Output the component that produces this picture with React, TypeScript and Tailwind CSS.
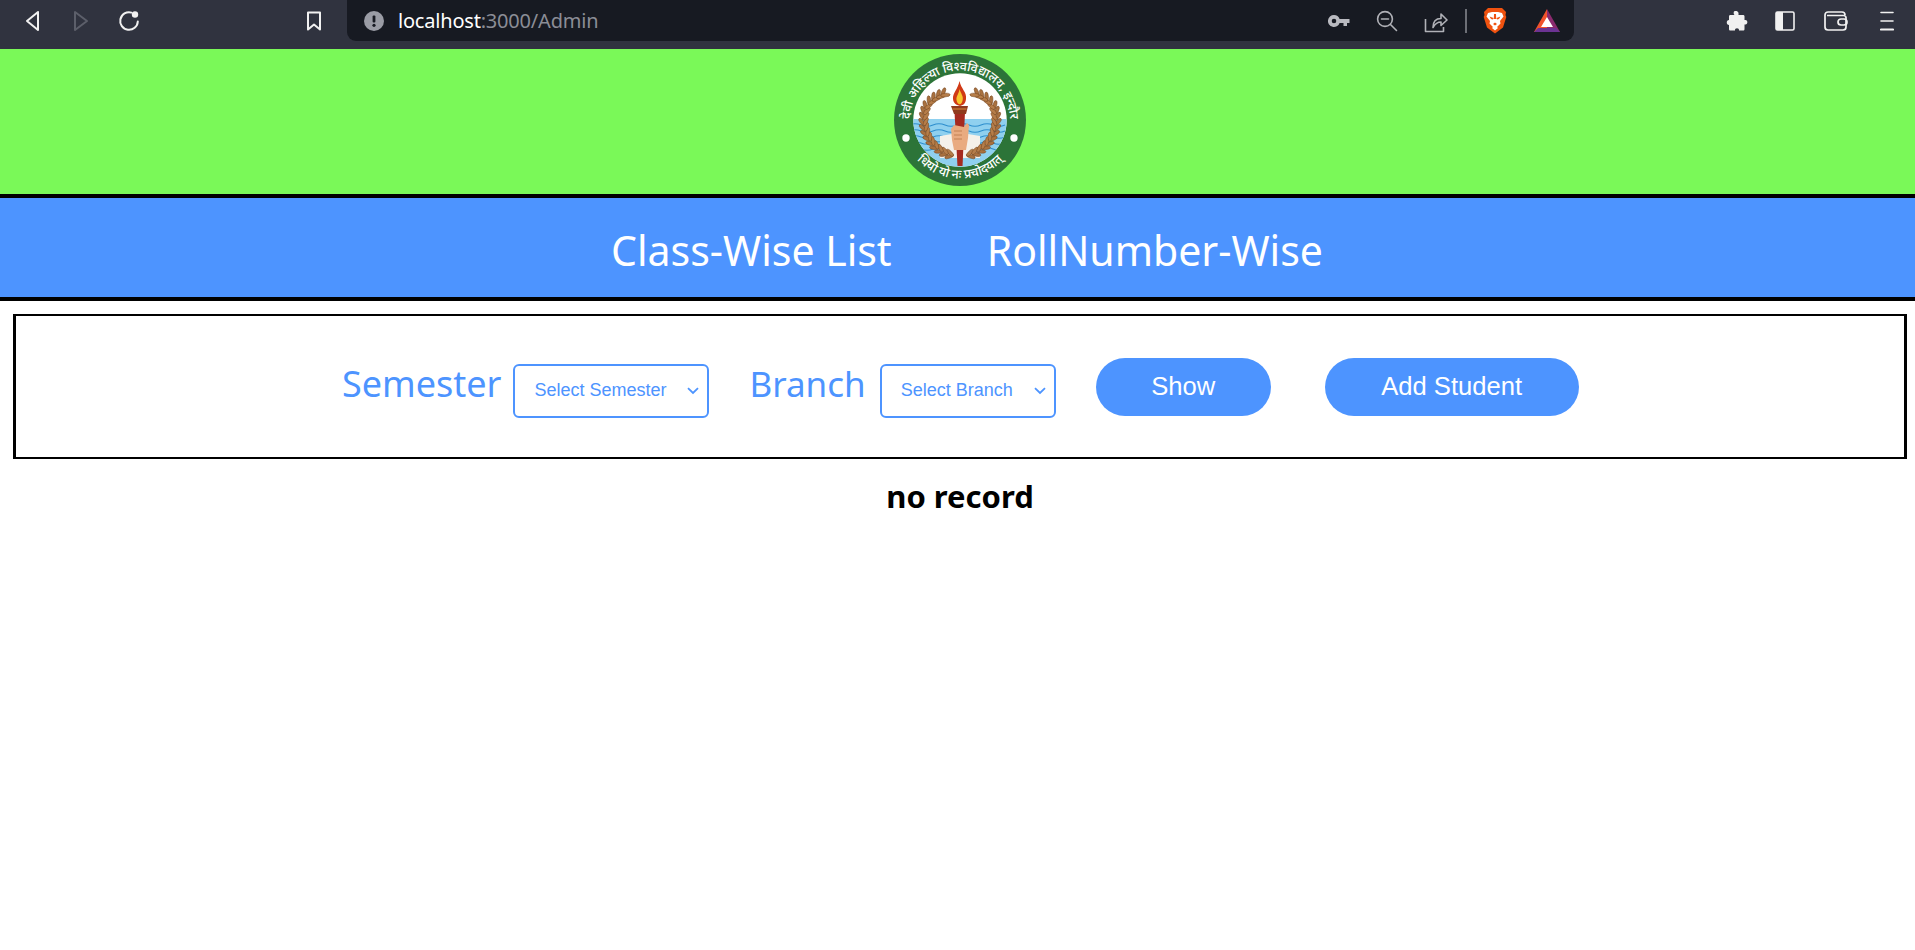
import React from "react";

const Chrome = () => (
  <div className="flex h-[49px] items-start bg-[#30333f] font-['Noto_Sans',sans-serif]">
    <div className="flex h-[41px] w-[347px] shrink-0 items-center pl-[23px]">
      <svg width="20" height="24" viewBox="0 0 20 24" fill="none" stroke="#f1f1f1" strokeWidth="2" strokeLinejoin="round">
        <path d="M15 3 L15 21 L4 12 Z" />
      </svg>
      <svg className="ml-[28px]" width="20" height="24" viewBox="0 0 20 24" fill="none" stroke="#5c5f6a" strokeWidth="2" strokeLinejoin="round">
        <path d="M4 3 L4 21 L16 12 Z" />
      </svg>
      <svg className="ml-[27px]" width="22" height="24" viewBox="0 0 22 24" fill="none" stroke="#f1f1f1" strokeWidth="2" strokeLinecap="round">
        <path d="M13.5 3.6 A8.8 8.8 0 1 0 19.8 12.5" />
        <circle cx="17" cy="5.5" r="3.2" fill="#f1f1f1" stroke="none" />
      </svg>
      <svg className="ml-[165px]" width="18" height="24" viewBox="0 0 18 24" fill="none" stroke="#f1f1f1" strokeWidth="2" strokeLinejoin="round">
        <path d="M3 3.5 H15 V20.5 L9 15.5 L3 20.5 Z" />
      </svg>
    </div>
    <div className="flex h-[41px] w-[1227px] shrink-0 items-center rounded-b-[9px] bg-[#171a22] pl-[17px]">
      <svg width="20" height="20" viewBox="0 0 20 20">
        <circle cx="10" cy="10" r="10" fill="#9a9ca5" />
        <rect x="8.6" y="4.5" width="2.8" height="7" rx="1" fill="#171a22" />
        <circle cx="10" cy="14.3" r="1.6" fill="#171a22" />
      </svg>
      <div className="ml-[14px] text-[20px] leading-none tracking-[-0.2px] text-white">
        localhost<span className="text-[#8b8d96]">:3000/Admin</span>
      </div>
      <div className="ml-auto flex items-center pr-[13px]">
        <svg width="22" height="14" viewBox="0 0 22 14" fill="#b9bac0">
          <path fillRule="evenodd" d="M6 1 A6 6 0 0 1 11.6 5 H21.5 V9 H19 V12 H15.5 V9 H11.6 A6 6 0 1 1 6 1 Z M6 4.7 A2.3 2.3 0 1 0 6 9.3 A2.3 2.3 0 0 0 6 4.7 Z" />
        </svg>
        <svg className="ml-[26px]" width="22" height="22" viewBox="0 0 22 22" fill="none" stroke="#b0b1b7" strokeWidth="1.6" strokeLinecap="round">
          <circle cx="9" cy="9" r="7.4" />
          <path d="M5.5 9 H12.5 M14.5 14.5 L20.5 20.5" />
        </svg>
        <svg className="ml-[26px]" width="24" height="24" viewBox="0 0 24 24" fill="none" stroke="#b0b1b7" strokeWidth="1.6" strokeLinejoin="round">
          <path d="M1.5 10 V22.5 H19.5 V18" />
          <path d="M9 18.5 C9 12.5 12 9.5 17 9.5 V5 L23 11 L17 16.5 V13 C13.5 13 11 15 9 18.5 Z" />
        </svg>
        <div className="ml-[17px] h-[24px] w-[2px] bg-[#6d6f76]" />
        <svg className="ml-[16px]" width="24" height="27" viewBox="0 0 24 27">
          <path d="M5 1 H19 L23 5 L22.5 8 L23.3 10 L20 20.5 L12 26.5 L4 20.5 L0.7 10 L1.5 8 L1 5 Z" fill="#f0520f" />
          <path d="M5 6 L9 5 H15 L19 6 L20.5 9.5 L17 14 L17.5 16.5 L14 20 L15 21 L12 23.5 L9 21 L10 20 L6.5 16.5 L7 14 L3.5 9.5 Z" fill="#ffffff" />
          <path d="M6.5 9.5 L10.5 11 L10 12.6 L8 12 Z M17.5 9.5 L13.5 11 L14 12.6 L16 12 Z M11 7 H13 L13.2 12 H10.8 Z M10 17 L12 15.5 L14 17 L12 18.5 Z" fill="#f0520f" />
        </svg>
        <svg className="ml-[26px]" width="28" height="25" viewBox="0 0 28 25">
          <path d="M14 1 L27 24 H14 Z" fill="#8a2a6e" />
          <path d="M14 1 L1 24 H14 Z" fill="#f0522c" />
          <path d="M14 9 L20 19 H8 Z" fill="#ffffff" />
          <path d="M1 24 L5 20 H23 L27 24 Z" fill="#6b3393" />
        </svg>
      </div>
    </div>
    <div className="flex h-[41px] flex-1 items-center pl-[152px]">
      <svg width="22" height="22" viewBox="0 0 22 22" fill="#f1f1f1">
        <path d="M8 1.5 C9.5 0.5 12 1 12.5 3 L12.5 5 H17 C18 5 18.5 5.5 18.5 6.5 V10 H19.5 C22 10 22 14.5 19.5 14.5 H18.5 V19 C18.5 20 18 20.5 17 20.5 H13 C13.5 17.5 8.5 17.5 9 20.5 H4.5 C3.5 20.5 3 20 3 19 V15 C0 15 0 10 3 10 V6.5 C3 5.5 3.5 5 4.5 5 H8.5 C7.5 4 7.5 2.5 8 1.5 Z" />
      </svg>
      <svg className="ml-[27px]" width="20" height="20" viewBox="0 0 20 20" fill="none">
        <path d="M2 1 H8 V19 H2 A1 1 0 0 1 1 18 V2 A1 1 0 0 1 2 1 Z" fill="#f1f1f1" />
        <rect x="1" y="1" width="18" height="18" rx="1.5" stroke="#f1f1f1" strokeWidth="1.6" />
      </svg>
      <svg className="ml-[29px]" width="24" height="20" viewBox="0 0 24 20" fill="none" stroke="#f1f1f1" strokeWidth="1.7">
        <path d="M1 4 A3 3 0 0 1 4 1 H18 A3 3 0 0 1 21 4 M1 4 V16 A3 3 0 0 0 4 19 H19 A3 3 0 0 0 22 16 V6.5 A2.5 2.5 0 0 0 19.5 4.5 H3" />
        <rect x="14" y="8" width="9" height="6" rx="3" />
      </svg>
      <svg className="ml-[32px]" width="14" height="20" viewBox="0 0 14 20" fill="none" stroke="#f1f1f1" strokeLinecap="round">
        <path d="M1 1.5 H13 M1 10 H13" strokeWidth="1.6" />
        <path d="M1 18.5 H13" strokeWidth="2.2" />
      </svg>
    </div>
  </div>
);

const leafSpots = Array.from({ length: 16 }, (_, i) => {
  const deg = 102 + i * 8.8;
  const rad = (deg * Math.PI) / 180;
  const r = deg > 200 ? 36 - (deg - 200) * 0.16 : 36;
  return {
    x: (66 + r * Math.cos(rad)).toFixed(1),
    y: (66 + r * Math.sin(rad)).toFixed(1),
    rot: (deg + 90).toFixed(1),
  };
});

const Wreath = ({ flip }: { flip?: boolean }) => (
  <g transform={flip ? "matrix(-1 0 0 1 132 0)" : undefined}>
    {leafSpots.map((p, i) => (
      <g key={i} transform={`translate(${p.x} ${p.y}) rotate(${p.rot})`}>
        <ellipse cx="3.5" cy="0" rx="4.6" ry="1.8" transform="rotate(-32)" fill="#a9713f" stroke="#73451f" strokeWidth="0.5" />
        <ellipse cx="3.5" cy="0" rx="4.6" ry="1.8" transform="rotate(32)" fill="#b57d49" stroke="#73451f" strokeWidth="0.5" />
      </g>
    ))}
  </g>
);

const Logo = () => (
  <svg width="132" height="132" viewBox="0 0 132 132">
    <defs>
      <path id="arcTop" d="M 16.2 71 A 50 50 0 1 1 115.8 71" />
      <path id="arcBottom" d="M 24 107 A 59 59 0 0 0 108 107" />
      <clipPath id="inner"><circle cx="66" cy="66" r="46.7" /></clipPath>
    </defs>
    <circle cx="66" cy="66" r="66" fill="#2c7438" />
    <circle cx="66" cy="66" r="46.7" fill="#ffffff" />
    <g clipPath="url(#inner)">
      <rect x="15" y="65" width="102" height="56" fill="#8fd0ef" />
      <path d="M15 71 q6 -2.5 12 0 t12 0 t12 0 t12 0 t12 0 t12 0 t12 0 t12 0 M15 77 q6 -2.5 12 0 t12 0 t12 0 t12 0 t12 0 t12 0 t12 0 t12 0 M15 83 q6 -2.5 12 0 t12 0 t12 0 t12 0 t12 0 t12 0 t12 0 t12 0 M15 89 q6 -2.5 12 0 t12 0 t12 0 t12 0 t12 0 t12 0 t12 0 t12 0 M15 95 q6 -2.5 12 0 t12 0 t12 0 t12 0 t12 0 t12 0 t12 0 t12 0" fill="none" stroke="#2f8fce" strokeWidth="1.2" />
      <path d="M46 82 L64 79 V104 L46 104 Z M68 79 L86 82 V104 L68 104 Z" fill="#f5f1ea" />
    </g>
    <Wreath />
    <Wreath flip />
    <path d="M60.5 58 H71 L68.5 112 H63.5 Z" fill="#a52a20" />
    <path d="M57 52 H74 L72 60 H60 Z" fill="#8f3a1e" />
    <path d="M58.5 55 H72.5" stroke="#d98b3a" strokeWidth="1" />
    <path d="M65.5 27 C67 35 73 38 72 45 C71.5 49 70 51 66 52 C62 51 59.5 49 59 45 C58.5 39 64 35 65.5 27 Z" fill="#d03a16" />
    <path d="M65.5 35 C67 40 69.5 42 68.7 46 C68 49 67 50 65.7 50.3 C64.5 50 63 49 62.5 46 C62 42 65 40 65.5 35 Z" fill="#f6c52e" />
    <path d="M57 75 L60 71 L70 73 L73 69 L75 71 L74 84 L72 96 H60 L58 86 Z" fill="#e9ab80" />
    <path d="M60 77 H68 M60 81 H68 M60 85 H68" stroke="#b97648" strokeWidth="0.8" />
    <path d="M63.5 96 H68.5 L68 112 H64 Z" fill="#a52a20" />
    <circle cx="12" cy="84" r="3.7" fill="#fff" />
    <circle cx="120" cy="84" r="3.7" fill="#fff" />
    <text fontSize="12.5" fill="#fff" fontFamily="'Noto Sans',sans-serif" fontWeight="500">
      <textPath href="#arcTop" startOffset="50%" textAnchor="middle">देवी अहिल्या विश्वविद्यालय, इन्दौर</textPath>
    </text>
    <text fontSize="12.5" fill="#fff" fontFamily="'Noto Sans',sans-serif" fontWeight="500">
      <textPath href="#arcBottom" startOffset="50%" textAnchor="middle">धियो यो नः प्रचोदयात्</textPath>
    </text>
  </svg>
);

const segoe = "font-['Noto_Sans',sans-serif]";
const selectCls =
  "h-[54px] w-full appearance-none rounded-[6px] border-2 border-[#4d94ff] bg-white pl-[19px] text-[18px] text-[#4d94ff] font-['Liberation_Sans',sans-serif]";

const Chevron = () => (
  <svg className="pointer-events-none absolute right-[10px] top-[23px]" width="12" height="8" viewBox="0 0 12 8" fill="none" stroke="#4d94ff" strokeWidth="1.8">
    <path d="M1 1.2 L6 6 L11 1.2" />
  </svg>
);

export default function App() {
  return (
    <div className="min-h-[950px] bg-white">
      <Chrome />
      <header className="flex h-[149px] items-center justify-center border-b-4 border-black bg-[#7af958] pl-[5px] pb-[3px]">
        <Logo />
      </header>
      <nav className={`flex h-[103px] items-center justify-center gap-[95px] border-b-4 border-black bg-[#4d94ff] pl-[19px] pt-[6px] text-[41px] text-white ${segoe}`}>
        <span>Class-Wise List</span>
        <span>RollNumber-Wise</span>
      </nav>
      <section className="ml-[13px] mr-[8px] mt-[13px] flex h-[145px] items-center border-y-2 border-x-[3px] border-black pl-[326px]">
        <span className={`mb-[5px] text-[36px] text-[#4d94ff] ${segoe}`}>Semester</span>
        <div className="relative ml-[12px] mt-[8px] w-[196px]">
          <select className={selectCls} defaultValue="">
            <option value="">Select Semester</option>
          </select>
          <Chevron />
        </div>
        <span className={`mb-[5px] ml-[40px] text-[35px] text-[#4d94ff] ${segoe}`}>Branch</span>
        <div className="relative ml-[14px] mt-[8px] w-[176px]">
          <select className={selectCls} defaultValue="">
            <option value="">Select Branch</option>
          </select>
          <Chevron />
        </div>
        <button className="ml-[40px] h-[58px] w-[175px] rounded-full bg-[#4d94ff] font-['Liberation_Sans',sans-serif] text-[25.6px] text-white">Show</button>
        <button className="ml-[54px] h-[58px] w-[254px] rounded-full bg-[#4d94ff] font-['Liberation_Sans',sans-serif] text-[25.6px] text-white">Add Student</button>
      </section>
      <h2 className={`mt-[17px] pl-[5px] text-center text-[31px] font-bold leading-[41px] text-black ${segoe}`}>no record</h2>
    </div>
  );
}
